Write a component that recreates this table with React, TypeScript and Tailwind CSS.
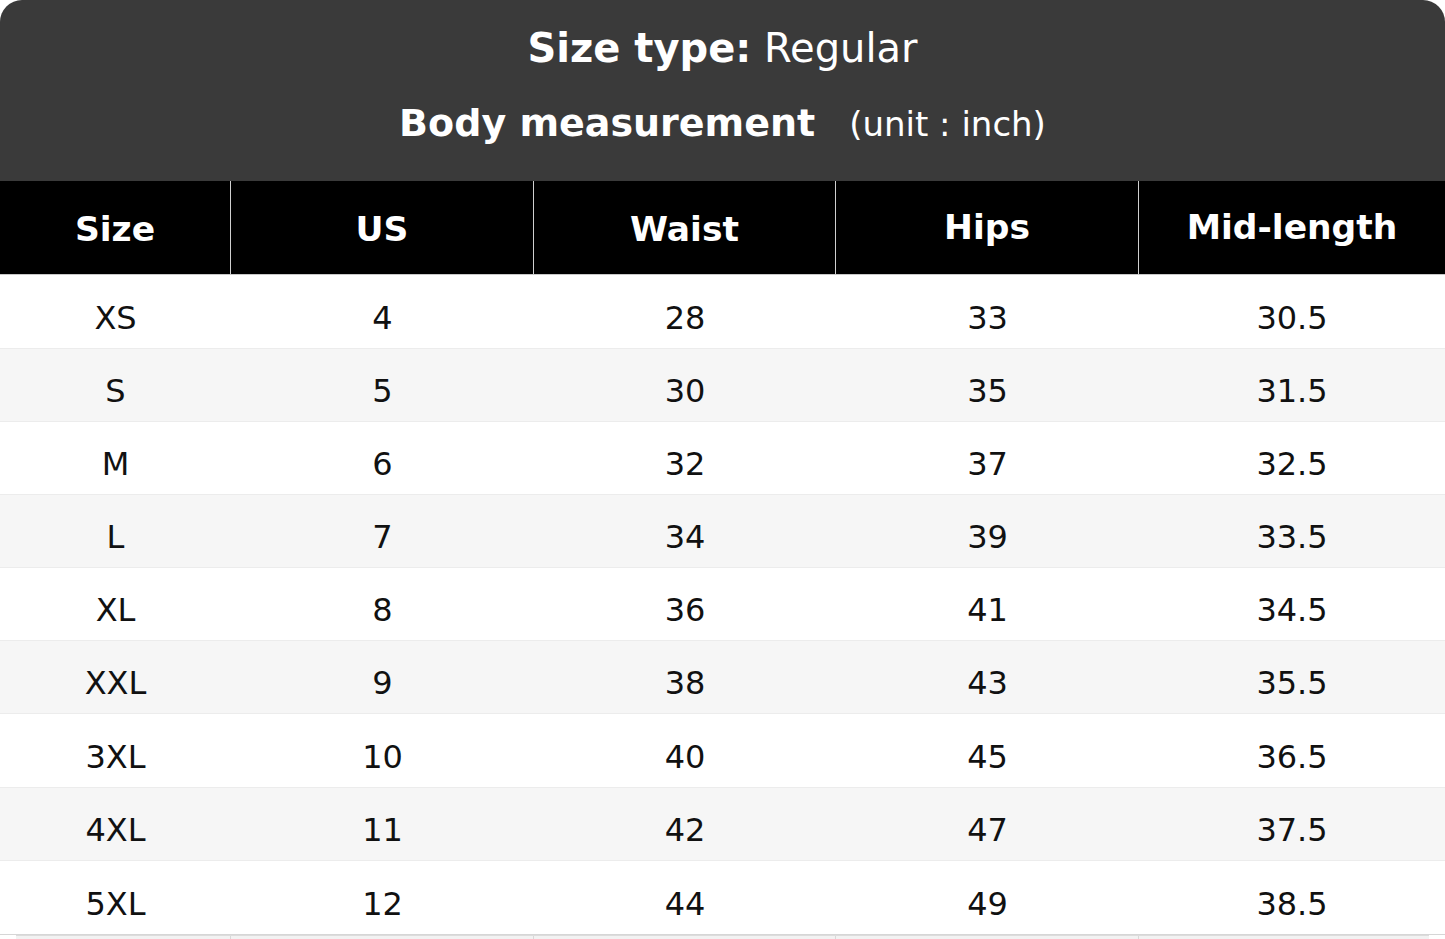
import React from "react";

const rows: string[][] = [
  ["XS", "4", "28", "33", "30.5"],
  ["S", "5", "30", "35", "31.5"],
  ["M", "6", "32", "37", "32.5"],
  ["L", "7", "34", "39", "33.5"],
  ["XL", "8", "36", "41", "34.5"],
  ["XXL", "9", "38", "43", "35.5"],
  ["3XL", "10", "40", "45", "36.5"],
  ["4XL", "11", "42", "47", "37.5"],
  ["5XL", "12", "44", "49", "38.5"],
];

const heights = ["h-[74px]", "h-[73px]", "h-[73px]", "h-[73px]", "h-[73px]", "h-[73px]", "h-[74px]", "h-[73px]", "h-[74px]"];

const headers = ["Size", "US", "Waist", "Hips", "Mid-length"];
const headerPad = ["pt-[5px]", "pt-[5px]", "pt-[5px]", "pt-0", "pt-0"];

export default function App() {
  return (
    <div className="w-[1445px] h-[939px] overflow-hidden bg-white font-['DejaVu_Sans',sans-serif]">
      <div className="h-[181px] bg-[#3a3a3a] rounded-t-[22px] flex flex-col items-center text-white">
        <div className="mt-[26px] text-[40px] leading-[44px]">
          <span className="font-bold">Size type:</span> Regular
        </div>
        <div className="mt-[31px] flex items-baseline leading-[44px]">
          <span className="font-bold text-[38px]">Body measurement</span>
          <span className="ml-[34px] text-[34px]">(unit : inch)</span>
        </div>
      </div>
      <div className="grid grid-cols-[231px_303px_302px_303px_306px]">
        {headers.map((h, i) => (
          <div
            key={h}
            className={`h-[94px] bg-black text-white font-bold text-[34.5px] flex items-center justify-center border-b border-[#c8c8c8] ${i < 4 ? "border-r border-r-[#d0d0d0]" : ""} ${headerPad[i]}`}
          >
            {h}
          </div>
        ))}
      </div>
      {rows.map((r, ri) => (
        <div
          key={ri}
          className={`grid grid-cols-[231px_303px_302px_303px_306px] ${heights[ri]} border-b ${ri === rows.length - 1 ? "border-[#d6d6d6]" : "border-[#ececec]"} ${ri % 2 === 1 ? "bg-[#f6f6f6]" : "bg-white"}`}
        >
          {r.map((c, ci) => (
            <div
              key={ci}
              className="flex items-center justify-center pt-[12px] text-[32px] text-[#111]"
            >
              {c}
            </div>
          ))}
        </div>
      ))}
      <div className="mx-[16px] h-[4px] bg-[#f2f2f2] border-t border-[#dcdcdc] grid grid-cols-[215px_303px_302px_303px_290px]">
        <div className="border-r border-[#d8d8d8]" />
        <div className="border-r border-[#d8d8d8]" />
        <div className="border-r border-[#d8d8d8]" />
        <div className="border-r border-[#d8d8d8]" />
        <div />
      </div>
    </div>
  );
}
